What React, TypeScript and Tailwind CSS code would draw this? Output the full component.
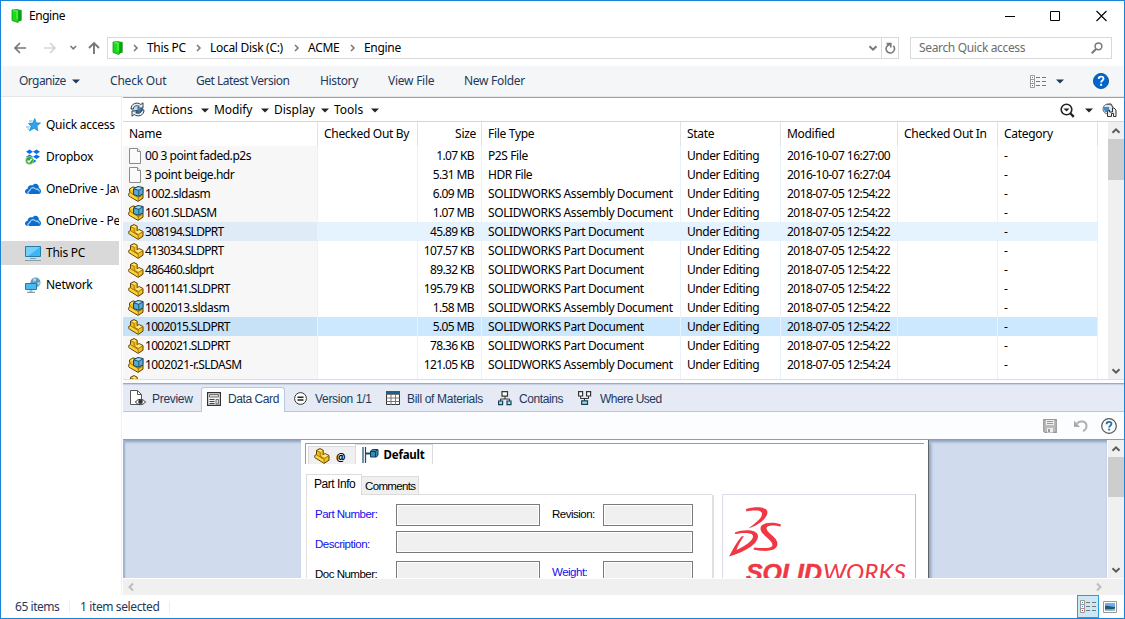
import React from "react";

type FileKind = "file" | "asm" | "prt";
type Row = { kind: FileKind; name: string; size: string; type: string; modified: string; state?: "hover" | "selected" };

const ASM = "SOLIDWORKS Assembly Document";
const PRT = "SOLIDWORKS Part Document";

const rows: Row[] = [
  { kind: "file", name: "00 3 point faded.p2s", size: "1.07 KB", type: "P2S File", modified: "2016-10-07 16:27:00" },
  { kind: "file", name: "3 point beige.hdr", size: "5.31 MB", type: "HDR File", modified: "2016-10-07 16:27:04" },
  { kind: "asm", name: "1002.sldasm", size: "6.09 MB", type: ASM, modified: "2018-07-05 12:54:22" },
  { kind: "asm", name: "1601.SLDASM", size: "1.07 MB", type: ASM, modified: "2018-07-05 12:54:22" },
  { kind: "prt", name: "308194.SLDPRT", size: "45.89 KB", type: PRT, modified: "2018-07-05 12:54:22", state: "hover" },
  { kind: "prt", name: "413034.SLDPRT", size: "107.57 KB", type: PRT, modified: "2018-07-05 12:54:22" },
  { kind: "prt", name: "486460.sldprt", size: "89.32 KB", type: PRT, modified: "2018-07-05 12:54:22" },
  { kind: "prt", name: "1001141.SLDPRT", size: "195.79 KB", type: PRT, modified: "2018-07-05 12:54:22" },
  { kind: "asm", name: "1002013.sldasm", size: "1.58 MB", type: ASM, modified: "2018-07-05 12:54:22" },
  { kind: "prt", name: "1002015.SLDPRT", size: "5.05 MB", type: PRT, modified: "2018-07-05 12:54:22", state: "selected" },
  { kind: "prt", name: "1002021.SLDPRT", size: "78.36 KB", type: PRT, modified: "2018-07-05 12:54:22" },
  { kind: "asm", name: "1002021-r.SLDASM", size: "121.05 KB", type: ASM, modified: "2018-07-05 12:54:24" },
];

const COLS = "grid grid-cols-[195px_100px_64px_199px_100px_117px_100px_100px]";

function FolderIcon() {
  return (
    <svg width="12" height="14" viewBox="0 0 12 14" className="shrink-0">
      <path d="M6 .8h4.500v11L7 12.500z" fill="#0fae12" />
      <path d="M1 1 6.500.5l1.500 1V12l-1 1.500L1 11.500z" fill="#17dd17" stroke="#078a0b" strokeWidth=".7" />
      <path d="M2 2 6 1.800v8" fill="none" stroke="#8df88d" strokeWidth=".8" />
      <path d="M10 1.500v9.500M8 3v9" stroke="#0a930d" strokeWidth=".8" />
    </svg>
  );
}

function PartIcon() {
  return (
    <svg width="16" height="16" viewBox="0 0 16 16" className="shrink-0">
      <path d="M2.500 2.300 6 .6l3.200 1.600V6.600l2-1L15 7.500v4.700l-4.800 3.200L.8 9.600V7.400l1.700-.8z" fill="#f3c01c" stroke="#5d4108" strokeLinejoin="round" />
      <path d="M3.300 2.700 6 1.400l2.500 1.100-2.400 1.400zM7.500 7.900l3.700-1.700 3 1.500-3.900 2.200z" fill="#ffe982" />
      <path d="M1.300 8 3 7.300l7 4.400v2.900L1.300 9.300z" fill="#ffd338" />
      <path d="M6.200 4.300v3.900l4 2.300 4.300-2.600M3 7l7.200 4.500v3.300M6.200 4.300 3 2.900" fill="none" stroke="#8d6510" strokeWidth=".8" />
    </svg>
  );
}

function AsmIcon() {
  return (
    <svg width="16" height="16" viewBox="0 0 16 16" className="shrink-0">
      <path d="M1.500 3 5 .9l3.500 1V7L15 8v4.200l-5 3.200L.8 10V7.300l1.400-.8L1.500 5z" fill="#f3c01c" stroke="#5d4108" strokeLinejoin="round" />
      <path d="M2.300 3.200 5 1.700l2 .7-2.500 1.700z" fill="#ffe982" />
      <path d="M1.300 8 3 7.300l7 4.400v2.900L1.300 9.700z" fill="#ffd338" />
      <path d="M3 7l7.200 4.700v3.100m0-3.100 4.300-2.500" fill="none" stroke="#8d6510" strokeWidth=".8" />
      <path d="m5.600 2.700 4.300-2.200 5.200 1v6.200l-4.400 2.600-5.100-1.700z" fill="#54acd8" stroke="#123d55" strokeLinejoin="round" />
      <path d="m6.900 2.800 3.100-1.500 3.900.7-3.100 1.800z" fill="#a7dcf3" />
      <path d="m6 3 4.800 1.300 4-2.400M10.800 4.500v5.300" fill="none" stroke="#173f56" strokeWidth=".8" />
    </svg>
  );
}

function DocIcon() {
  return (
    <svg width="16" height="18" viewBox="0 0 16 18" className="shrink-0">
      <path d="M1.500 1.500h8l3 3v12h-11z" fill="#fbfbfb" stroke="#8b8b8b" />
      <path d="M9.500 1.500v3h3" fill="#eee" stroke="#8b8b8b" />
    </svg>
  );
}

function FileIcon({ kind }: { kind: FileKind }) {
  if (kind === "file") return <DocIcon />;
  return kind === "asm" ? <AsmIcon /> : <PartIcon />;
}

function Caret({ color = "#222" }: { color?: string }) {
  return (
    <svg width="8" height="5" viewBox="0 0 8 5" className="shrink-0">
      <path d="M0 .5h8L4 4.6z" fill={color} />
    </svg>
  );
}

function Chevron({ d, color = "#5c5c5c", w = 2 }: { d: string; color?: string; w?: number }) {
  return (
    <svg width="10" height="10" viewBox="0 0 10 10" className="shrink-0">
      <path d={d} fill="none" stroke={color} strokeWidth={w} />
    </svg>
  );
}
const DOWN = "M1.5 3.2 5 6.7l3.5-3.5";
const UP = "M1.5 6.8 5 3.3l3.5 3.5";
const LEFT = "M7 1.5 3.5 5 7 8.5";
const RIGHT = "M3 1.5 6.5 5 3 8.5";

function ListViewIcon() {
  return (
    <svg width="16" height="13" viewBox="0 0 16 13" className="shrink-0">
      <path d="M.5.5h4v12h-4zM.5 4.5h4M.5 8.5h4" fill="#fff" stroke="#999" />
      <path d="M6 2.500h4m2 0h4M6 6.500h4m2 0h4M6 10.500h4m2 0h4" stroke="#777" />
      <path d="M2 2.500h1" stroke="#3a8b5e" />
      <path d="M2 6.500h1" stroke="#3d8cff" />
      <path d="M2 10.500h1" stroke="#e02020" />
    </svg>
  );
}

function TitleBar() {
  return (
    <div className="flex h-[29px] shrink-0 items-center pl-[10px]">
      <FolderIcon />
      <span className="ml-[6px] tracking-[-0.45px]">Engine</span>
      <svg width="102" height="12" viewBox="0 0 102 12" className="ml-auto mr-[17px]">
        <path d="M0 6.500h10M45.500 1.500h9v9h-9z" fill="none" stroke="#000" />
        <path d="m91.500 1 10 10m0-10-10 10" fill="none" stroke="#000" strokeWidth="1.100" />
      </svg>
    </div>
  );
}

const crumbs = [
  { label: "This PC", box: "w-[40px]" },
  { label: "Local Disk (C:)", box: "w-[75px]" },
  { label: "ACME", box: "w-[33px]" },
  { label: "Engine", box: "w-[40px]" },
];

function AddressBar() {
  return (
    <div className="flex h-[36px] shrink-0 items-start pl-[12px] pt-[7px]">
      <div className="flex h-[22px] w-[94px] shrink-0 items-center">
        <svg width="92" height="14" viewBox="0 0 92 14">
          <path d="M13 7H2m5-5L2 7l5 5" fill="none" stroke="#777" strokeWidth="1.700" />
          <path d="M31 7h11m-5-5 5 5-5 5" fill="none" stroke="#d5d5d5" strokeWidth="1.700" />
          <path d="m57.500 5 2.800 2.800L63.100 5" fill="none" stroke="#777" strokeWidth="1.600" />
          <path d="M81 13V2m-5 5 5-5 5 5" fill="none" stroke="#777" strokeWidth="1.900" />
        </svg>
      </div>
      <div className="flex h-[22px] w-[792px] shrink-0 items-center border border-[#d9d9d9] pl-[4px]">
        <FolderIcon />
        {crumbs.map((c) => (
          <React.Fragment key={c.label}>
            <svg width="6" height="8" viewBox="0 0 6 8" className="ml-[9px] mr-[8px] shrink-0">
              <path d="m1 1 3 3-3 3" fill="none" stroke="#777" strokeWidth="1.500" />
            </svg>
            <span className={`${c.box} shrink-0 whitespace-nowrap tracking-[-0.3px]`}>{c.label}</span>
          </React.Fragment>
        ))}
        <div className="ml-auto flex h-full items-center pr-[3px]">
          <Chevron d={DOWN} color="#777" />
        </div>
        <div className="flex h-full w-[17px] items-center justify-center border-l border-[#d9d9d9]">
          <svg width="11" height="12" viewBox="0 0 11 12">
            <path d="M8.300 3.800a4.200 4.200 0 1 1-3.500-1.200M1.500 1.600h4.300v4" fill="none" stroke="#777" strokeWidth="1.600" />
          </svg>
        </div>
      </div>
      <div className="ml-[11px] flex h-[22px] w-[202px] shrink-0 items-center border border-[#d9d9d9] pl-[8px] pr-[8px] text-[#6d6d6d]">
        <span className="tracking-[-0.35px]">Search Quick access</span>
        <svg width="12" height="12" viewBox="0 0 12 12" className="ml-auto">
          <circle cx="7.500" cy="4.300" r="3.400" fill="none" stroke="#777" strokeWidth="1.500" />
          <path d="M5 7 .8 11.200" stroke="#777" strokeWidth="2" />
        </svg>
      </div>
    </div>
  );
}

function CommandBar() {
  return (
    <div className="flex h-[31px] shrink-0 items-center border-b border-[#e6e7e8] bg-[#f5f6f7] pl-[18px] text-[#1e395b]">
      <span className="w-[53px] tracking-[-0.55px]">Organize</span>
      <Caret color="#1e395b" />
      <span className="ml-[30px] w-[86px] tracking-[-0.2px]">Check Out</span>
      <span className="w-[124px] tracking-[-0.5px]">Get Latest Version</span>
      <span className="w-[68px] tracking-[-0.35px]">History</span>
      <span className="w-[76px] tracking-[-0.25px]">View File</span>
      <span className="tracking-[-0.3px]">New Folder</span>
      <div className="ml-auto flex items-center pr-[15px]">
        <ListViewIcon />
        <span className="ml-[10px] mr-[29px] flex"><Caret color="#1e395b" /></span>
        <svg width="16" height="16" viewBox="0 0 16 16">
          <circle cx="8" cy="8" r="7.600" fill="#0066cf" stroke="#07478d" strokeWidth=".8" />
          <path d="M5.700 6c0-3.200 4.800-2.900 4.800-.3C10.500 7.500 8.100 7.600 8.100 9.500" fill="none" stroke="#fff" strokeWidth="1.800" />
          <path d="M7.100 10.800h2v2h-2z" fill="#fff" />
        </svg>
      </div>
    </div>
  );
}

function CloudIcon() {
  return (
    <svg width="16" height="12" viewBox="0 0 16 12">
      <path d="M0 8.500C0 6.500 2 6 2.500 6 2.600 3 5 1.600 7.500 2.600 10-1 14.500 1.500 13.800 5 15.500 5.500 16 7 16 8.500c0 1.700-1.500 2.500-2.500 2.500H3C1 11 0 10 0 8.500z" fill="#0a6fcf" />
      <path d="M4 11.200c-1.500-.5-1.600-3.200.9-3.500C5 4.700 9.200 3.700 10.700 6.200c2-.7 3.600.6 3.500 2.200" fill="none" stroke="#fff" />
    </svg>
  );
}

const sideItems: { label: string; icon: React.ReactNode }[] = [
  {
    label: "Quick access",
    icon: (
      <svg width="16" height="16" viewBox="0 0 16 16">
        <path d="m9.800 1.500 1.200 4.300 4.500.3-3.500 2.700.8 5-3.700-2.600L4.500 14l1.600-4.600L3.500 6.300l4.300-.2z" fill="#2fa4ec" stroke="#1682ca" strokeWidth=".7" />
        <path d="M4 4h3.500M1 10h3.500M2.500 12h2" stroke="#5eb6ee" />
      </svg>
    ),
  },
  {
    label: "Dropbox",
    icon: (
      <svg width="16" height="16" viewBox="0 0 16 16">
        <path d="m4.500.5 3.500 2.300-3.500 2.300L1 2.800zm7 0L15 2.800l-3.500 2.300L8 2.800zM4.500 5.500 8 7.800l-3.500 2.300L1 7.800zm7 0L15 7.800l-3.500 2.300L8 7.800zM8 10l3.500 2L8 14.200 4.500 12z" fill="#0b6cf0" />
        <circle cx="4.500" cy="11.500" r="4" fill="#36a832" stroke="#d9efd9" strokeWidth=".6" />
        <path d="m2.500 11.500 1.500 1.700 2.700-3.500" fill="none" stroke="#fff" strokeWidth="1.400" />
      </svg>
    ),
  },
  { label: "OneDrive - Javelin", icon: <CloudIcon /> },
  { label: "OneDrive - Personal", icon: <CloudIcon /> },
  {
    label: "This PC",
    icon: (
      <svg width="16" height="16" viewBox="0 0 16 16">
        <path d="M.5 1.500h15v10H.5z" fill="#3db7f2" stroke="#267ca8" />
        <path d="M1 2h14L3 11H1z" fill="#75cffa" />
        <path d="M5 13.500h6M0 15.500h16" stroke="#829fae" />
      </svg>
    ),
  },
  {
    label: "Network",
    icon: (
      <svg width="16" height="16" viewBox="0 0 16 16">
        <circle cx="10.500" cy="5.500" r="5" fill="#5c9cc1" />
        <path d="M8 2c2-2 4 0 3 1.500L8.500 5zM12 6l3-1-1 4z" fill="#b5dbea" />
        <path d="M.5 6.500h11v6H.5z" fill="#48bbf4" stroke="#2479a5" />
        <path d="M2 15.300h8M4.500 14h3" stroke="#688797" />
      </svg>
    ),
  },
];

function Sidebar() {
  return (
    <nav className="flex w-[121px] shrink-0 flex-col border-r border-[#f0f0f0] pt-[16px]">
      {sideItems.map((s, i) => (
        <div key={s.label} className={`mb-[8px] flex h-[24px] w-[118px] shrink-0 items-center overflow-hidden pl-[24px] ${i === 4 ? "bg-[#d9d9d9]" : ""}`}>
          <span className="flex w-[16px] shrink-0">{s.icon}</span>
          <span className="ml-[5px] whitespace-nowrap tracking-[-0.25px]">{s.label}</span>
        </div>
      ))}
    </nav>
  );
}

function ActionBar() {
  return (
    <div className="flex h-[25px] shrink-0 items-center border-b border-t border-b-[#d5d5d5] border-t-[#a0a0a0] pl-[7px] pt-px">
      <svg width="15" height="15" viewBox="0 0 15 15" className="mb-[2px] mr-[7px] shrink-0">
        <circle cx="7.500" cy="7.500" r="6" fill="#c7dbea" />
        <path d="M2 9c4 0 7-3 11-3v3c0 3-4 5-7 4z" fill="#3478ba" />
        <path d="M1 7C1 1.500 7-.5 10.800 2.500L13 .8V6H7.500l1.800-1.700C6.500 3 3.500 4 3.300 7zM14 8c0 5.500-6 7.500-9.800 4.500L2 14.200V9h5.500l-1.800 1.700c2.800 1.300 5.800.3 6-2.700z" fill="#e3edf4" stroke="#222b35" strokeWidth=".9" />
      </svg>
      <span className="w-[49px] tracking-[-0.1px]">Actions</span><Caret />
      <span className="ml-[5px] w-[47px] tracking-[-0.1px]">Modify</span><Caret />
      <span className="ml-[5px] w-[47px]">Display</span><Caret />
      <span className="ml-[5px] w-[37px]">Tools</span><Caret />
      <div className="ml-auto flex items-center pr-[7px]">
        <svg width="15" height="15" viewBox="0 0 15 15">
          <circle cx="6.500" cy="6.500" r="5.300" fill="#fff" stroke="#222" strokeWidth="1.600" />
          <path d="m10.500 10.500 3.300 3.300" stroke="#222" strokeWidth="2.400" />
          <path d="M3.500 5.500h6l-3 3z" fill="#222" />
        </svg>
        <span className="ml-[10px] mr-[9px] flex"><Caret /></span>
        <svg width="15" height="14" viewBox="0 0 15 14">
          <circle cx="6" cy="6" r="5" fill="#d7e9f4" stroke="#626b73" />
          <path d="M1 4h6v5H3z" fill="#448acb" />
          <path d="M5 1.500 9 .8 11 4" fill="none" stroke="#555" />
          <path d="M5.500 13.500V8.500l2-1.500v2h3V5h1.500l2 2v6.500h-2.500v-3h-2v3z" fill="#eee" stroke="#333" />
        </svg>
      </div>
    </div>
  );
}

function VScroll({ thumb }: { thumb: string }) {
  return (
    <div className="flex w-[16px] shrink-0 flex-col items-center bg-[#f0f0f0]">
      <div className="flex h-[17px] shrink-0 items-center"><Chevron d={UP} /></div>
      <div className={`${thumb} w-full shrink-0 bg-[#cdcdcd]`} />
      <div className="mt-auto flex h-[17px] shrink-0 items-center"><Chevron d={DOWN} /></div>
    </div>
  );
}

const cell = "border-r border-[#e9f1fb] whitespace-nowrap pl-[6px]";
const headers = ["Name", "Checked Out By", "Size", "File Type", "State", "Modified", "Checked Out In", "Category"];

function FileList() {
  return (
    <div className="flex h-[258px] shrink-0 border-b border-[#d5dfee]">
      <div className="w-[975px] shrink-0 overflow-hidden leading-[19px]">
        <div className={`${COLS} h-[24px]`}>
          {headers.map((h) => (
            <div key={h} className={`border-r border-[#e3e3e3] whitespace-nowrap pt-[2px] tracking-[-0.3px] ${h === "Size" ? "pr-[5px] text-right" : "pl-[6px]"}`}>{h}</div>
          ))}
        </div>
        {rows.map((r) => (
          <div key={r.name} className={`${COLS} h-[19px] ${r.state === "hover" ? "bg-[#e5f3ff]" : r.state === "selected" ? "bg-[#cce8ff]" : ""}`}>
            <div className={`flex items-center border-r border-[#e9f1fb] pl-[5px] ${r.state === "hover" ? "bg-[#dfebf6]" : r.state === "selected" ? "bg-[#c7e1f7]" : "bg-[#f7f7f7]"}`}>
              <FileIcon kind={r.kind} />
              <span className={`ml-px whitespace-nowrap ${r.kind === "file" ? "tracking-[-0.45px]" : r.kind === "asm" ? "tracking-[-0.5px]" : "tracking-[-0.68px]"}`}>{r.name}</span>
            </div>
            <div className={cell} />
            <div className="whitespace-nowrap border-r border-[#e9f1fb] pr-[7px] text-right tracking-[-0.62px]">{r.size}</div>
            <div className={`${cell} tracking-[-0.4px]`}>{r.type}</div>
            <div className={`${cell} tracking-[-0.43px]`}>Under Editing</div>
            <div className={`${cell} tracking-[-0.54px]`}>{r.modified}</div>
            <div className={cell} />
            <div className={cell}>-</div>
          </div>
        ))}
        <div className={`${COLS} h-[19px]`}>
          <div className="border-r border-[#e9f1fb] bg-[#f7f7f7] pl-[5px] pt-px"><PartIcon /></div>
          {headers.slice(1).map((h) => <div key={h} className={cell} />)}
        </div>
      </div>
      <div className="ml-auto mr-0 flex"><VScroll thumb="h-[41px]" /></div>
    </div>
  );
}

function TabStrip() {
  return (
    <div className="flex h-[29px] shrink-0 items-stretch border-b border-t border-b-[#b9c8dd] border-t-[#a0aabb] bg-[#e5eaf5] font-['Liberation_Sans',sans-serif] text-[#1e395b] shadow-[inset_0_2px_1px_-1px_#c6d0e0]">
      <div className="flex w-[78px] items-center pl-[7px] pt-px">
        <svg width="16" height="16" viewBox="0 0 16 16">
          <path d="M.5.500h7l4 4V14.500H.5z" fill="#fff" stroke="#555" />
          <path d="M7.500.500v4h4" fill="none" stroke="#555" />
          <path d="M5.500 12c2-3.500 7.500-3.500 10 0-2.500 3.500-8 3.500-10 0z" fill="#fff" stroke="#333" />
          <circle cx="10.500" cy="11.800" r="2.300" fill="#333" />
        </svg>
        <span className="ml-[6px] pt-px tracking-[-0.3px]">Preview</span>
      </div>
      <div className="-mb-px mt-[3px] flex w-[84px] items-center rounded-t-[3px] border border-b-0 border-[#b9c8dd] bg-[#fcfdff] pb-[2px] pl-[5px]">
        <svg width="14" height="14" viewBox="0 0 14 14">
          <path d="M.6.600h12.800v12.800H.6z" fill="#f2f2f2" stroke="#333" strokeWidth="1.200" />
          <path d="M2.500 2.500h9v2.500h-9zM9 7.500h2.500v4.500H9z" fill="#ddd" stroke="#555" strokeWidth=".8" />
          <path d="M2.500 7.500h5m-5 2h5m-5 2h5" stroke="#444" />
        </svg>
        <span className="ml-[7px] whitespace-nowrap tracking-[-0.42px]">Data Card</span>
      </div>
      <div className="flex items-center pl-[9px] pt-px">
        <svg width="13" height="13" viewBox="0 0 13 13">
          <circle cx="6.500" cy="6.500" r="5.900" fill="#fff" stroke="#333" />
          <path d="M3.500 5.200h6m-6 2.800h6" stroke="#222" strokeWidth="1.600" />
        </svg>
        <span className="ml-[8px] w-[71px] whitespace-nowrap pt-px tracking-[-0.3px]">Version 1/1</span>
        <svg width="14" height="14" viewBox="0 0 14 14">
          <path d="M.5.500h13v13H.5z" fill="#fff" stroke="#333" />
          <path d="M.5 3.500h13M.5 7h13M.5 10.500h13M5 3v11M9.500 3v11" stroke="#777" fill="none" />
          <path d="M0 0h14v3H0z" fill="#1a6285" />
        </svg>
        <span className="ml-[7px] w-[91px] whitespace-nowrap pt-px tracking-[-0.32px]">Bill of Materials</span>
        <svg width="14" height="15" viewBox="0 0 14 15">
          <path d="M7 5v3M2.500 10V8h9v2" fill="none" stroke="#333" />
          <path d="M4 .600h5.500v4.500H4z" fill="#fff" stroke="#333" strokeWidth="1.200" />
          <path d="M.6 10h4v3.600h-4zM9 10h4v3.600H9z" fill="#9fe0f6" stroke="#183e52" strokeWidth="1.200" />
        </svg>
        <span className="ml-[7px] w-[59px] whitespace-nowrap pt-px tracking-[-0.4px]">Contains</span>
        <svg width="14" height="15" viewBox="0 0 14 15">
          <path d="M2.500 4v3.500h8V4M6.500 7.500V10" fill="none" stroke="#333" />
          <path d="M.6.600h4V5h-4zM8.600.600h4V5h-4z" fill="#fff" stroke="#333" strokeWidth="1.200" />
          <path d="M3.700 9.800h5.800v3.600H3.700z" fill="#9fe0f6" stroke="#183e52" strokeWidth="1.200" />
        </svg>
        <span className="ml-[8px] whitespace-nowrap pt-px tracking-[-0.5px]">Where Used</span>
      </div>
    </div>
  );
}

function CardToolbar() {
  return (
    <div className="flex h-[28px] shrink-0 items-center justify-end border-b border-[#8b9bb8] bg-[#fcfdff] pr-[7px]">
      <svg width="14" height="14" viewBox="0 0 14 14">
        <path d="M.7.700h12.600v12.600H2L.7 12z" fill="#bbb" stroke="#999" strokeWidth="1.200" />
        <path d="M3 1h8v5H3zM4 9h6v4.500H4z" fill="#eee" />
        <path d="M4 2.500h6m-6 2h6" stroke="#999" />
        <path d="M5 10h2v3H5z" fill="#999" />
      </svg>
      <svg width="15" height="14" viewBox="0 0 15 14" className="ml-[16px]">
        <path d="M4 4.500C7 1 13.500 2 13.500 7c0 2-1 4-3.500 5" fill="none" stroke="#b0b0b0" strokeWidth="2" />
        <path d="M1 1.500V8h6z" fill="#aaa" />
      </svg>
      <svg width="16" height="16" viewBox="0 0 16 16" className="ml-[13px]">
        <circle cx="8" cy="8" r="7.300" fill="#fafcff" stroke="#555" strokeWidth="1.200" />
        <path d="M5.500 6.200c0-3.300 5-3 5-.4 0 1.700-2.400 1.900-2.400 3.800" fill="none" stroke="#26729b" strokeWidth="1.800" />
        <path d="M7.200 10.700h1.900v1.800H7.200z" fill="#26729b" />
      </svg>
    </div>
  );
}

const field = "border border-[#7a7a7a] bg-[#f0f0f0] shadow-[inset_0_0_0_1px_#fff]";

function DsLogo() {
  return (
    <svg width="52" height="50" viewBox="0 0 52 50" className="shrink-0">
      <g fill="#f03845">
        <path d="M17 2C26-.7 38-.7 38.500 5 38.500 12 28 19 19.500 21.500 26 16 33.500 11 33 6.500 32.500 2.500 23 3.500 17.300 4.500z" />
        <path d="M6 25.500C15 22 28.500 22.500 29 29 29 38 13 46 0 49.500 4 42 8 34.500 12.500 29.500L15 29C11.500 34 9 38.500 7.500 43 16 39 24.500 33.500 24 29 23.500 25 14 25.500 6 27z" />
        <path d="M52 17.500C45 14.500 31 15 31.500 22 32 28 43 32.500 43.500 38 43.500 41.500 34 41.500 25 40.500L24.500 42.500C33 44.500 48 45.500 48.500 37 48.500 30 38 26.500 37.500 21.500 37.500 17.500 46 18 51.500 19.500z" />
      </g>
    </svg>
  );
}

function DataCard() {
  return (
    <div className="flex h-[138px] shrink-0 overflow-hidden font-['Liberation_Sans',sans-serif]">
      <div className="flex w-[984px] shrink-0 border-l-2 border-[#a3b4cf] bg-[#d0dcee] shadow-[inset_0_3px_3px_-1px_#8da0c0]">
        <div className="ml-[176px] w-[628px] shrink-0 overflow-hidden border-r-[1.5px] border-[#5f646b] bg-white shadow-[2px_3px_3px_#8d9db8]">
          <div className="ml-[4px] mt-[3px] flex h-[21px] w-[619px] border-l border-t border-[#9b9b9b]">
            <div className="ml-[2px] mt-[2px] flex w-[47px] items-center border-l border-t border-[#dcdcdc] bg-[#f0f0f0] pl-[5px]">
              <span className="flex h-[14px] w-[15px] items-center"><PartIcon /></span>
              <span className="ml-[7px] pt-[3px] font-['Noto_Sans',sans-serif] text-[10.500px] font-bold">@</span>
            </div>
            <div className="flex w-[78px] items-center border-x border-t border-[#dcdcdc] bg-white pl-[6px]">
              <svg width="17" height="16" viewBox="0 0 17 16">
                <path d="M1 0v16M3.500 0v16" stroke="#164e6c" strokeWidth="1.200" />
                <path d="M4 6.500h5" stroke="#164e6c" strokeWidth="2" />
                <path d="m8.500 4 2-1.500h5.500V8l-1.500 2h-6z" fill="#388cb2" stroke="#123e55" />
                <path d="M8.500 4.500h5V10m0-5.500 2-2" fill="none" stroke="#123e55" />
              </svg>
              <span className="ml-[4.500px] pt-px font-['Noto_Sans',sans-serif] text-[11.500px] font-bold tracking-[-0.2px]">Default</span>
            </div>
          </div>
          <div className="ml-[5px] mt-[10px] flex">
            <div className="w-[408px] shrink-0">
              <div className="flex h-[20px] items-end">
                <div className="h-[20px] w-[56px] shrink-0 whitespace-nowrap border border-b-0 border-[#dcdcdc] bg-white pl-[7px] pt-px tracking-[-0.45px]">Part Info</div>
                <div className="h-[18px] w-[57px] shrink-0 whitespace-nowrap border border-b-0 border-l-0 border-[#dcdcdc] bg-[#f0f0f0] pl-[3px] pt-px text-[11.500px] tracking-[-0.650px]">Comments</div>
              </div>
              <div className="flex">
                <div className="h-px w-[55px] border-l border-[#dcdcdc]" />
                <div className="h-px w-[351px] bg-[#dcdcdc]" />
              </div>
              <div className="flex h-[83px] flex-col overflow-hidden border-l border-r-2 border-[#e0e0e0] pl-[8px] pt-[9px] tracking-[-0.500px] text-[11.500px]">
                <div className="flex h-[27px] shrink-0">
                  <span className="w-[81px] pt-[2px] text-[#1010f0]">Part Number:</span>
                  <div className={`${field} h-[22px] w-[144px]`} />
                  <span className="w-[63px] pl-[12px] pt-[2px]">Revision:</span>
                  <div className={`${field} h-[22px] w-[90px]`} />
                </div>
                <div className="flex h-[30px] shrink-0">
                  <span className="w-[81px] pt-[5px] text-[#1010f0]">Description:</span>
                  <div className={`${field} h-[22px] w-[297px]`} />
                </div>
                <div className="flex h-[30px] shrink-0">
                  <span className="w-[81px] pt-[5px]">Doc Number:</span>
                  <div className={`${field} h-[22px] w-[144px]`} />
                  <span className="w-[63px] pl-[12px] pt-[3px] text-[#1010f0]">Weight:</span>
                  <div className={`${field} h-[22px] w-[90px]`} />
                </div>
              </div>
            </div>
            <div className="ml-[8px] mt-[20px] h-[96px] w-[194px] shrink-0 border border-[#dcdce6] border-r-[#bcbcc4] pl-[6px] pt-[12px]">
              <DsLogo />
              <svg width="164" height="24" viewBox="0 0 164 24" className="ml-[17px] mt-[6px]">
                <text x="0" y="18" fontSize="24" fontFamily="Liberation Sans, sans-serif" fontWeight="700" fontStyle="italic" fill="#f03845" stroke="#f03845" strokeWidth=".5" textLength="76" lengthAdjust="spacingAndGlyphs">SOLID</text>
                <text x="77" y="18" fontSize="24" fontFamily="Lato, sans-serif" fontStyle="italic" fill="#f03845" textLength="83" lengthAdjust="spacingAndGlyphs">WORKS</text>
              </svg>
            </div>
          </div>
        </div>
      </div>
      <div className="ml-auto flex"><VScroll thumb="h-[40px]" /></div>
    </div>
  );
}

function StatusBar() {
  return (
    <div className="flex h-[23px] shrink-0 items-center pl-[14px] text-[#1e395b]">
      <span className="w-[55px] border-r border-[#eeeeee] leading-[12px] tracking-[-0.45px]">65 items</span>
      <span className="w-[100px] border-r border-[#eeeeee] pl-[10px] leading-[12px] tracking-[-0.38px]">1 item selected</span>
      <div className="ml-auto flex h-[23px] w-[22px] items-center justify-center border border-[#26a0da] bg-[#cbe8f6]">
        <ListViewIcon />
      </div>
      <svg width="14" height="12" viewBox="0 0 14 12" className="ml-[4px] mr-[7px]">
        <path d="M.5.500h13v11H.5z" fill="#fff" stroke="#999" />
        <path d="M2 2h10v8H2z" fill="#6eaef2" />
        <path d="M2 5c4-1 6 1 10 1v4H2z" fill="#28586a" />
        <path d="M2 8.500c4-1 7 .5 10-1V10H2z" fill="#98bdd0" />
      </svg>
    </div>
  );
}

export default function App() {
  return (
    <div className="flex h-[619px] w-[1125px] flex-col overflow-hidden border border-[#1883d7] bg-white font-['Noto_Sans',sans-serif] text-[12px] leading-[16px] text-black">
      <TitleBar />
      <AddressBar />
      <CommandBar />
      <div className="flex h-[498px] shrink-0">
        <Sidebar />
        <main className="ml-px flex w-[1001px] shrink-0 flex-col">
          <ActionBar />
          <FileList />
          <div className="h-[3px] shrink-0 bg-[#fbfcff]" />
          <TabStrip />
          <CardToolbar />
          <DataCard />
          <div className="mt-px flex h-[16px] shrink-0 items-center justify-between bg-[#f0f0f0] pl-[3px] pr-[20px]">
            <Chevron d={LEFT} color="#bdbdbd" />
            <Chevron d={RIGHT} color="#bdbdbd" />
          </div>
        </main>
      </div>
      <StatusBar />
    </div>
  );
}
